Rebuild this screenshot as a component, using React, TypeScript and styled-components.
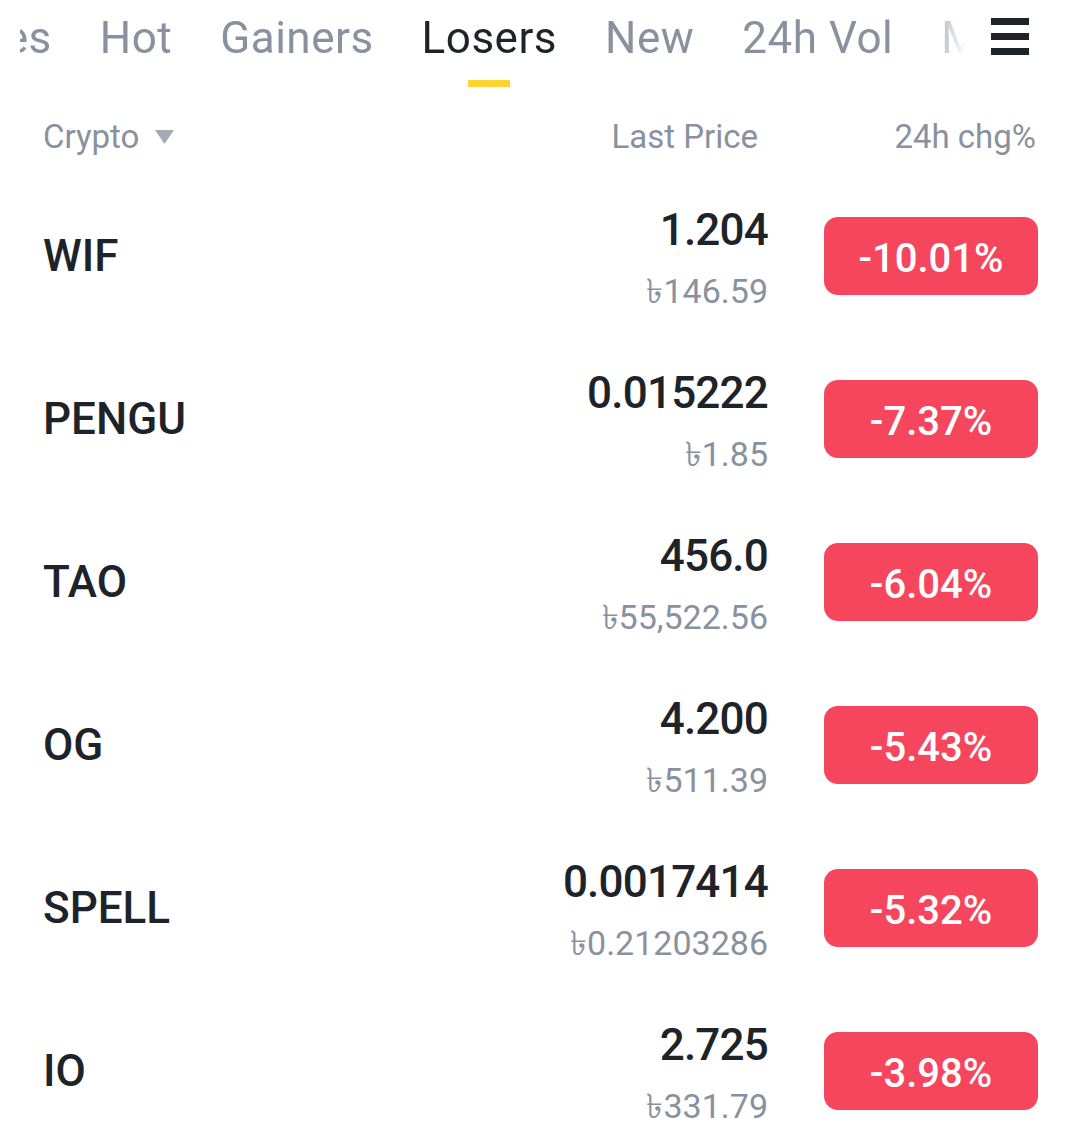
import { useLayoutEffect, useRef } from 'react';
import styled, { createGlobalStyle } from 'styled-components';

const GlobalStyle = createGlobalStyle`
  html, body {
    margin: 0;
    padding: 0;
    background: #ffffff;
  }
  body {
    font-family: Roboto, 'Noto Sans', 'DejaVu Sans', sans-serif;
    color: #1e2329;
  }
`;

const StPage = styled.div`
  width: 1080px;
  overflow: hidden;
`;

const StTabBar = styled.div`
  height: 100px;
  display: flex;
  align-items: flex-start;
`;

const StTabScroller = styled.div`
  flex: 0 0 945px;
  margin-left: 20px;
  overflow-x: auto;
  scrollbar-width: none;
  position: relative;
  -webkit-mask-image: linear-gradient(to right, #000 calc(100% - 40px), transparent 92%);
  mask-image: linear-gradient(to right, #000 calc(100% - 40px), transparent);

  &::-webkit-scrollbar {
    display: none;
  }
`;

const StTabTrack = styled.div`
  display: flex;
  gap: 48px;
  padding-top: 12px;
  width: max-content;
`;

const StTab = styled.div<{ active?: boolean }>`
  display: flex;
  flex-direction: column;
  align-items: center;
  font-size: 44px;
  line-height: 52px;
  font-weight: 400;
  letter-spacing: 0.5px;
  white-space: nowrap;
  color: ${(props) => (props.active ? '#1e2329' : '#8a919e')};

  &::after {
    content: '';
    width: 42px;
    height: 7px;
    margin-top: 16px;
    background: ${(props) => (props.active ? '#fcd535' : 'transparent')};
  }
`;

const StMenuButton = styled.button`
  margin: 18px 0 0 26px;
  padding: 0;
  border: none;
  background: transparent;
  display: flex;
`;

const StHeader = styled.div`
  height: 74px;
  display: flex;
  align-items: center;
  padding: 0 44px 0 43px;
  font-size: 33px;
  line-height: 38px;
  color: #8a919e;
`;

const StHeaderCrypto = styled.div`
  flex: 1;
  display: flex;
  align-items: center;
  gap: 16px;
`;

const StHeaderPrice = styled.div`
  padding-right: 8px;
`;

const StHeaderChange = styled.div`
  width: 214px;
  margin-left: 56px;
  text-align: right;
`;

const StRow = styled.div`
  height: 163px;
  display: flex;
  align-items: center;
  padding: 0 42px 0 43px;
`;

const StName = styled.div`
  flex: 1;
  font-size: 44px;
  line-height: 52px;
  font-weight: 500;
  color: #1e2329;
  padding-top: 1px;
`;

const StPriceBlock = styled.div`
  display: flex;
  flex-direction: column;
  align-items: flex-end;
  padding-top: 3px;
`;

const StPrice = styled.div`
  font-size: 44px;
  line-height: 52px;
  font-weight: 500;
  letter-spacing: -0.8px;
  color: #1e2329;
`;

const StFiat = styled.div`
  margin-top: 15px;
  font-size: 34px;
  line-height: 40px;
  color: #8a919e;
`;

const StBadge = styled.div`
  width: 214px;
  height: 78px;
  margin-left: 56px;
  border-radius: 14px;
  background: #f6465d;
  color: #ffffff;
  font-size: 40px;
  font-weight: 500;
  display: flex;
  align-items: center;
  justify-content: center;
  padding-top: 6px;
  box-sizing: border-box;
`;

interface Coin {
  name: string;
  price: string;
  fiat: string;
  change: string;
}

const coins: Coin[] = [
  { name: 'WIF', price: '1.204', fiat: '৳146.59', change: '-10.01%' },
  { name: 'PENGU', price: '0.015222', fiat: '৳1.85', change: '-7.37%' },
  { name: 'TAO', price: '456.0', fiat: '৳55,522.56', change: '-6.04%' },
  { name: 'OG', price: '4.200', fiat: '৳511.39', change: '-5.43%' },
  { name: 'SPELL', price: '0.0017414', fiat: '৳0.21203286', change: '-5.32%' },
  { name: 'IO', price: '2.725', fiat: '৳331.79', change: '-3.98%' },
];

const tabs = ['Favorites', 'Hot', 'Gainers', 'Losers', 'New', '24h Vol', 'Market Cap'];

function MenuIcon() {
  return (
    <svg width="38" height="37" viewBox="0 0 38 37" fill="#1e2329">
      <rect x="0" y="0" width="38" height="7" />
      <rect x="0" y="15" width="38" height="7" />
      <rect x="0" y="30" width="38" height="7" />
    </svg>
  );
}

function SortCaret() {
  return (
    <svg width="19" height="14" viewBox="0 0 19 14" fill="#a5abb5">
      <polygon points="0,0 19,0 9.5,14" />
    </svg>
  );
}

function App() {
  const scrollerRef = useRef<HTMLDivElement>(null);
  const hotRef = useRef<HTMLDivElement>(null);

  useLayoutEffect(() => {
    const scroller = scrollerRef.current;
    const hot = hotRef.current;
    if (scroller && hot) {
      // keep "Hot" at x=100 of the page, Favorites scrolled mostly out of view
      scroller.scrollLeft = hot.offsetLeft - 80;
    }
  }, []);

  return (
    <StPage>
      <GlobalStyle />
      <StTabBar>
        <StTabScroller ref={scrollerRef}>
          <StTabTrack>
            {tabs.map((tab) => (
              <StTab key={tab} active={tab === 'Losers'} ref={tab === 'Hot' ? hotRef : undefined}>
                {tab}
              </StTab>
            ))}
          </StTabTrack>
        </StTabScroller>
        <StMenuButton aria-label="menu">
          <MenuIcon />
        </StMenuButton>
      </StTabBar>
      <StHeader>
        <StHeaderCrypto>
          Crypto
          <SortCaret />
        </StHeaderCrypto>
        <StHeaderPrice>Last Price</StHeaderPrice>
        <StHeaderChange>24h chg%</StHeaderChange>
      </StHeader>
      {coins.map((coin) => (
        <StRow key={coin.name}>
          <StName>{coin.name}</StName>
          <StPriceBlock>
            <StPrice>{coin.price}</StPrice>
            <StFiat>{coin.fiat}</StFiat>
          </StPriceBlock>
          <StBadge>{coin.change}</StBadge>
        </StRow>
      ))}
    </StPage>
  );
}

export default App;
